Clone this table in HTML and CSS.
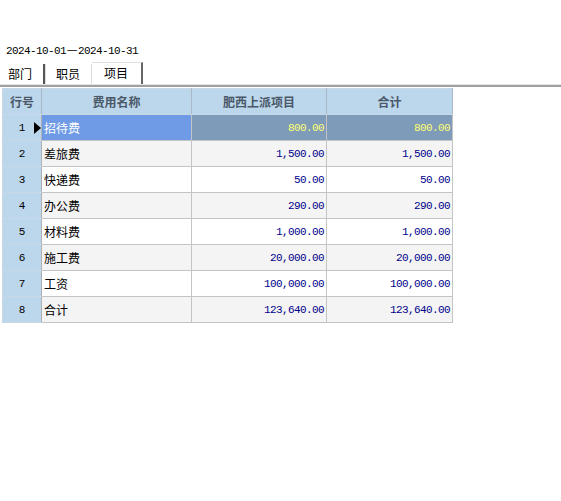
FILE: index.html
```html
<!DOCTYPE html>
<html>
<head>
<meta charset="utf-8">
<link rel="stylesheet" href="styles.css">
</head>
<body>
<div class="date">2024-10-01<span class="dash">—</span>2024-10-31</div>
<div class="tabs">
  <div class="tab">部门</div>
  <div class="tab">职员</div>
  <div class="tab active">项目</div>
</div>
<table class="grid">
  <colgroup><col class="c1"><col class="c2"><col class="c3"><col class="c4"></colgroup>
  <thead>
    <tr><th>行号</th><th>费用名称</th><th>肥西上派项目</th><th>合计</th></tr>
  </thead>
  <tbody>
    <tr class="sel"><td class="no">1<span class="ind"></span></td><td class="name">招待费</td><td class="num">800.00</td><td class="num">800.00</td></tr>
    <tr class="alt"><td class="no">2</td><td class="name">差旅费</td><td class="num">1,500.00</td><td class="num">1,500.00</td></tr>
    <tr><td class="no">3</td><td class="name">快递费</td><td class="num">50.00</td><td class="num">50.00</td></tr>
    <tr class="alt"><td class="no">4</td><td class="name">办公费</td><td class="num">290.00</td><td class="num">290.00</td></tr>
    <tr><td class="no">5</td><td class="name">材料费</td><td class="num">1,000.00</td><td class="num">1,000.00</td></tr>
    <tr class="alt"><td class="no">6</td><td class="name">施工费</td><td class="num">20,000.00</td><td class="num">20,000.00</td></tr>
    <tr><td class="no">7</td><td class="name">工资</td><td class="num">100,000.00</td><td class="num">100,000.00</td></tr>
    <tr class="alt"><td class="no">8</td><td class="name">合计</td><td class="num">123,640.00</td><td class="num">123,640.00</td></tr>
  </tbody>
</table>
</body>
</html>
```
FILE: styles.css
```css
html, body { margin: 0; padding: 0; background: #fff; }
body {
  font-family: "Noto Sans CJK SC", sans-serif;
  font-size: 12px;
  color: #000;
}
.date {
  font-family: "Liberation Mono", "Noto Sans CJK SC", monospace;
  font-size: 11px;
  letter-spacing: -0.6px;
  line-height: 14px;
  padding: 42px 0 0 6px;
  height: 22px;
}
.dash {
  font-family: "Noto Sans CJK SC", sans-serif;
  font-size: 12px;
  letter-spacing: 0;
  display: inline-block;
  width: 12px;
  text-align: center;
}
.tabs {
  display: flex;
  height: 20px;
  border-bottom: 1px solid #e4e4e4;
  box-shadow: 0 2px 0 #a0a0a0;
  margin-bottom: 3px;
}
.tab {
  line-height: 20px;
  height: 20px;
  box-sizing: border-box;
}
.tab:nth-child(1) { width: 45px; padding-left: 8px; border-right: 2px solid #555; box-shadow: 1px 0 0 #ddd; }
.tab:nth-child(2) { width: 47px; padding-left: 11px; border-right: 1px solid #ddd; }
.tab.active {
  width: 51px;
  padding-left: 12px;
  border-top: 1px solid #e0e0e0;
  border-right: 2px solid #666;
  background: #fff;
  line-height: 20px;
  margin-top: -2px;
  height: 22px;
}
.grid {
  border-collapse: collapse;
  margin-left: 2px;
  table-layout: fixed;
}
.c1 { width: 39px; }
.c2 { width: 150px; }
.c3 { width: 135px; }
.c4 { width: 126px; }
.grid th, .grid td {
  border: 1px solid #c4c4c4;
  height: 26px;
  padding: 0;
  box-sizing: border-box;
  white-space: nowrap;
  overflow: hidden;
}
.grid th {
  background: #bcd6ec;
  color: #4a5868;
  font-weight: bold;
  border-color: #c8d8e6;
  border-right-color: #a8b8c8;
  text-align: center;
  border-top: 1px solid #c8d8e6;
}
.grid td.no {
  background: #bcd6ec;
  text-align: center;
  font-family: "Liberation Mono", monospace;
  font-size: 11px;
  color: #000;
  position: relative;
  border-color: #c8d8e6;
  border-right-color: #b0b0b0;
}
.grid td.name { padding-left: 2px; background: #fff; }
.grid td.num {
  text-align: right;
  padding-right: 2px;
  font-family: "Liberation Mono", monospace;
  font-size: 11px;
  letter-spacing: -0.6px;
  color: #00008b;
  background: #fff;
}
.grid tr.alt td.name, .grid tr.alt td.num { background: #f4f4f4; }
.grid tr.sel td.name { background: #6f9be6; color: #fff; }
.grid tr.sel td.num { background: #7f9bba; color: #ffff70; }
.ind {
  position: absolute;
  left: 31px;
  top: 7px;
  width: 0;
  height: 0;
  border-top: 6px solid transparent;
  border-bottom: 6px solid transparent;
  border-left: 7px solid #000;
}
```
